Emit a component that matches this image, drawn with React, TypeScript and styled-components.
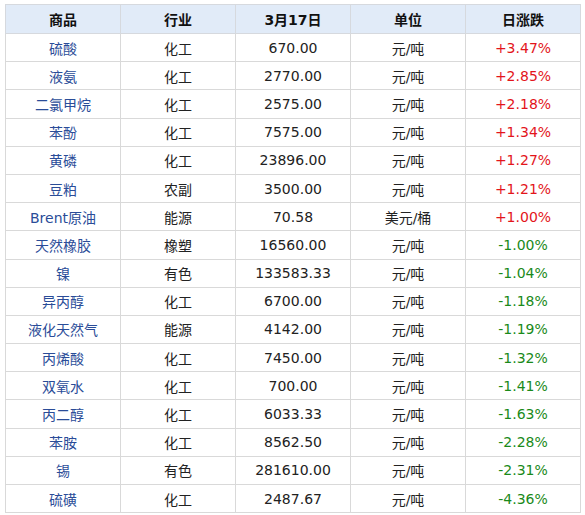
import styled, { createGlobalStyle } from "styled-components";

const GlobalStyle = createGlobalStyle`
  body {
    margin: 0;
    background: #ffffff;
    font-family: "DejaVu Sans", "Noto Sans CJK SC", sans-serif;
  }
`;

type Row = {
  name: string;
  sector: string;
  price: string;
  unit: string;
  change: string;
};

const rows: Row[] = [
  { name: "硫酸", sector: "化工", price: "670.00", unit: "元/吨", change: "+3.47%" },
  { name: "液氨", sector: "化工", price: "2770.00", unit: "元/吨", change: "+2.85%" },
  { name: "二氯甲烷", sector: "化工", price: "2575.00", unit: "元/吨", change: "+2.18%" },
  { name: "苯酚", sector: "化工", price: "7575.00", unit: "元/吨", change: "+1.34%" },
  { name: "黄磷", sector: "化工", price: "23896.00", unit: "元/吨", change: "+1.27%" },
  { name: "豆粕", sector: "农副", price: "3500.00", unit: "元/吨", change: "+1.21%" },
  { name: "Brent原油", sector: "能源", price: "70.58", unit: "美元/桶", change: "+1.00%" },
  { name: "天然橡胶", sector: "橡塑", price: "16560.00", unit: "元/吨", change: "-1.00%" },
  { name: "镍", sector: "有色", price: "133583.33", unit: "元/吨", change: "-1.04%" },
  { name: "异丙醇", sector: "化工", price: "6700.00", unit: "元/吨", change: "-1.18%" },
  { name: "液化天然气", sector: "能源", price: "4142.00", unit: "元/吨", change: "-1.19%" },
  { name: "丙烯酸", sector: "化工", price: "7450.00", unit: "元/吨", change: "-1.32%" },
  { name: "双氧水", sector: "化工", price: "700.00", unit: "元/吨", change: "-1.41%" },
  { name: "丙二醇", sector: "化工", price: "6033.33", unit: "元/吨", change: "-1.63%" },
  { name: "苯胺", sector: "化工", price: "8562.50", unit: "元/吨", change: "-2.28%" },
  { name: "锡", sector: "有色", price: "281610.00", unit: "元/吨", change: "-2.31%" },
  { name: "硫磺", sector: "化工", price: "2487.67", unit: "元/吨", change: "-4.36%" },
];

const Wrap = styled.div`
  padding: 4px 0 0 5px;
`;

const Table = styled.table`
  border-collapse: collapse;
  table-layout: fixed;
  width: 576px;
  font-size: 14px;
  color: #222;
`;

const HeadCell = styled.th`
  height: 28px;
  background: #e1ebf8;
  border: 1px solid #d6d9de;
  font-weight: bold;
  font-size: 14px;
  color: #111;
  text-align: center;
  padding: 0;
`;

const BodyRow = styled.tr`
  height: 28.2px;
`;

const Cell = styled.td<{ $tone?: "name" | "up" | "down" }>`
  border: 1px solid #d9d9d9;
  padding: 0;
  text-align: center;
  white-space: nowrap;
  color: ${(p) =>
    p.$tone === "name"
      ? "#2a4c98"
      : p.$tone === "up"
      ? "#e3151b"
      : p.$tone === "down"
      ? "#1a8a1a"
      : "#222"};
`;

export default function App() {
  return (
    <>
      <GlobalStyle />
      <Wrap>
        <Table>
          <thead>
            <tr>
              <HeadCell>商品</HeadCell>
              <HeadCell>行业</HeadCell>
              <HeadCell>3月17日</HeadCell>
              <HeadCell>单位</HeadCell>
              <HeadCell>日涨跌</HeadCell>
            </tr>
          </thead>
          <tbody>
            {rows.map((r) => (
              <BodyRow key={r.name}>
                <Cell $tone="name">{r.name}</Cell>
                <Cell>{r.sector}</Cell>
                <Cell>{r.price}</Cell>
                <Cell>{r.unit}</Cell>
                <Cell $tone={r.change.startsWith("+") ? "up" : "down"}>{r.change}</Cell>
              </BodyRow>
            ))}
          </tbody>
        </Table>
      </Wrap>
    </>
  );
}
